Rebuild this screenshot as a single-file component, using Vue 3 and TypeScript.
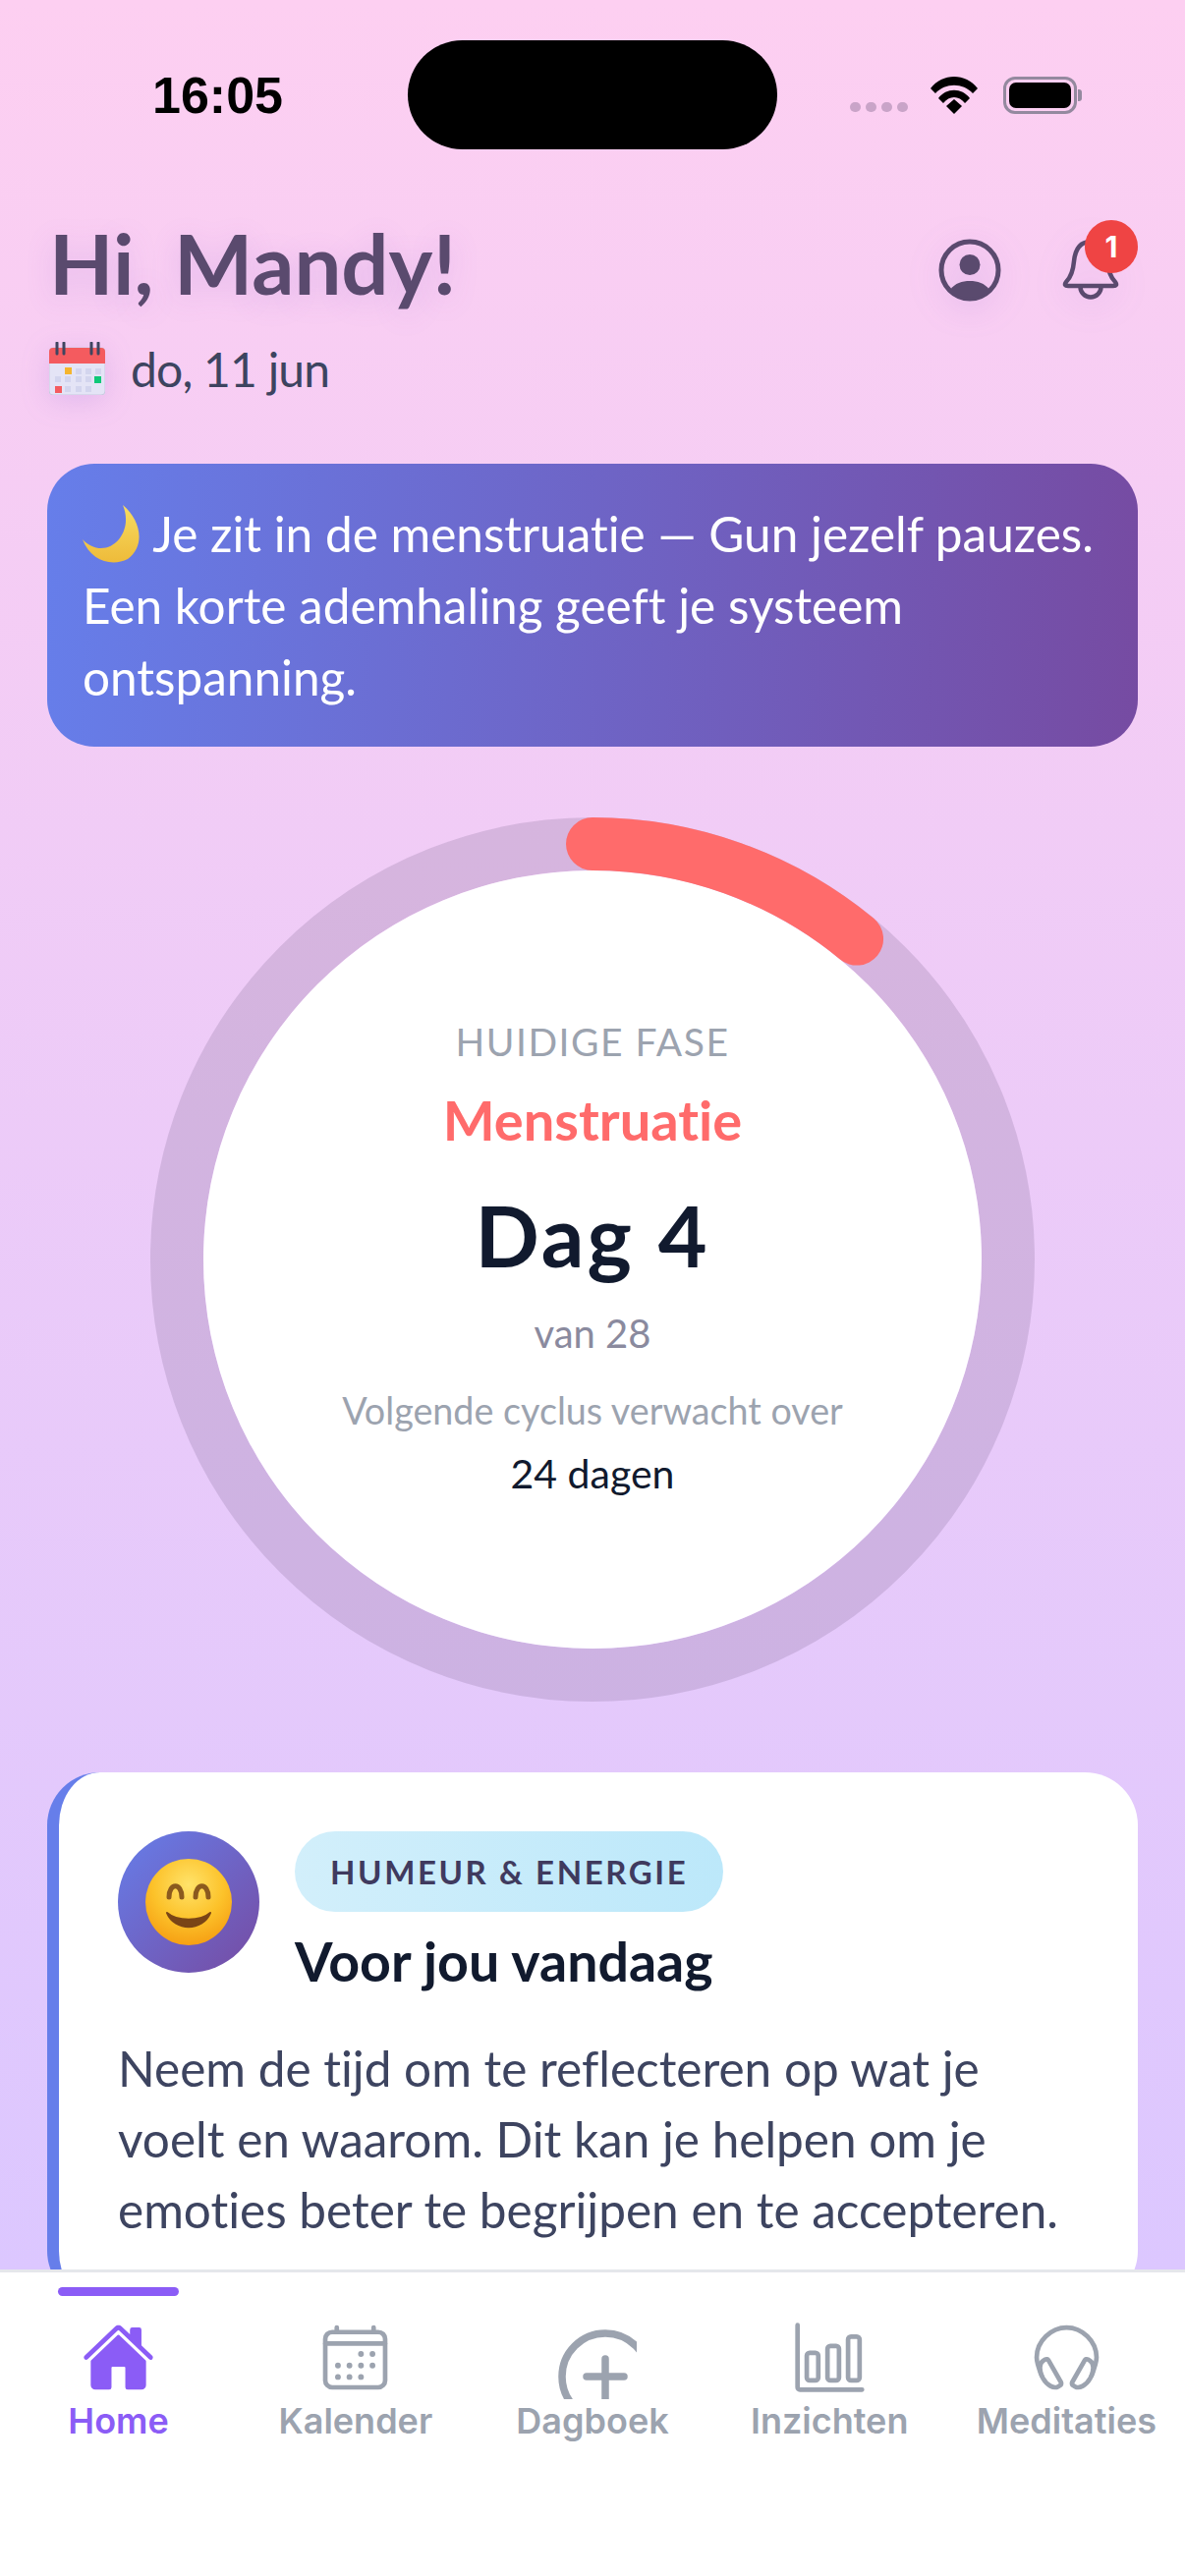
<script setup lang="ts">
const tabs = ["Home", "Kalender", "Dagboek", "Inzichten", "Meditaties"];

const ringRadius = 423;
const arcAngle = (39.5 * Math.PI) / 180;
const arcEnd = {
  x: 450 + ringRadius * Math.sin(arcAngle),
  y: 450 - ringRadius * Math.cos(arcAngle),
};
const arcPath = `M450 ${450 - ringRadius} A${ringRadius} ${ringRadius} 0 0 1 ${arcEnd.x} ${arcEnd.y}`;
</script>

<template>
  <div class="screen">
    <main class="content">
      <div class="status">
        <div class="status-left"><span class="time">16:05</span></div>
        <div class="island"></div>
        <div class="status-right">
          <span class="dots"><i></i><i></i><i></i><i></i></span>
          <svg class="wifi" width="50" height="38" viewBox="0 0 50 38">
            <path d="M1 12 C13 -4 37 -4 49 12 L44 17 C34 6 16 6 6 17Z" />
            <path d="M9 22 C17 11 33 11 41 22 L36 27 C30 19 20 19 14 27Z" />
            <path d="M17 30 L25 23 L33 30 L25 38Z" />
          </svg>
          <span class="battery"><b></b></span>
          <span class="battery-cap"></span>
        </div>
      </div>

      <header class="header">
        <h1 class="title">Hi, Mandy!</h1>
        <div class="actions">
          <svg width="66" height="66" viewBox="0 0 66 66" class="action-icon">
            <circle cx="33" cy="33" r="29" fill="none" stroke="#5a4a6e" stroke-width="5" />
            <circle cx="33" cy="27.5" r="10.5" fill="#5a4a6e" />
            <path d="M13 53 C18 46 25 44 33 44 C41 44 48 46 53 53 A29 29 0 0 1 13 53Z" fill="#5a4a6e" />
          </svg>
          <div class="bell">
            <svg width="60" height="66" viewBox="0 0 60 66" class="action-icon">
              <path d="M30 4 C18 4 14 14 13 24 C12 36 9 41 5 45 C3 48 4 49 7 49 H53 C56 49 57 48 55 45 C51 41 48 36 47 24 C46 14 42 4 30 4Z" fill="none" stroke="#5a4a6e" stroke-width="4.5" stroke-linejoin="round" />
              <path d="M19.5 50 A10.5 10.5 0 0 0 40.5 50" fill="none" stroke="#5a4a6e" stroke-width="4.5" />
            </svg>
            <span class="badge">1</span>
          </div>
        </div>
      </header>

      <div class="date">
        <svg width="57" height="54" viewBox="0 0 57 54">
          <rect x="0" y="6" width="57" height="48" rx="4" fill="#e4e4f6" stroke="#c9cbe0" />
          <path d="M0 22 V10 a4 4 0 0 1 4 -4 H53 a4 4 0 0 1 4 4 V22Z" fill="#f45b5f" />
          <path d="M8 1 V12 M15 1 V12 M43 1 V12 M50 1 V12" stroke="#3f4560" stroke-width="3" stroke-linecap="round" />
          <g fill="#d3d5ee">
            <rect x="27" y="27" width="6" height="6" /><rect x="37" y="27" width="6" height="6" /><rect x="47" y="27" width="6" height="6" />
            <rect x="6" y="35" width="6" height="6" /><rect x="16" y="35" width="6" height="6" /><rect x="27" y="35" width="6" height="6" /><rect x="37" y="35" width="6" height="6" />
            <rect x="16" y="45" width="6" height="6" /><rect x="27" y="45" width="6" height="6" /><rect x="37" y="45" width="6" height="6" />
          </g>
          <rect x="16" y="26" width="7" height="7" fill="#f5b52e" />
          <rect x="46" y="35" width="7" height="7" fill="#0fc878" />
          <rect x="6" y="45" width="7" height="7" fill="#f45b5f" />
        </svg>
        <span>do, 11 jun</span>
      </div>

      <section class="banner">
        <svg class="moon" width="60" height="60" viewBox="0 0 60 60">
          <defs>
            <linearGradient id="moonFill" x1="0" y1="0" x2="0" y2="1">
              <stop offset="0" stop-color="#f7dc62" />
              <stop offset="1" stop-color="#eebb3a" />
            </linearGradient>
          </defs>
          <path d="M41 0 C60 16 64 42 46 55 C30 63 8 57 0 35 C12 48 28 46 37 35 C45 25 46 12 41 0Z" fill="url(#moonFill)" />
        </svg>
        Je zit in de menstruatie — Gun jezelf pauzes. Een korte ademhaling geeft je systeem ontspanning.
      </section>

      <section class="ring">
        <svg class="ring-art" width="900" height="900" viewBox="0 0 900 900">
          <circle cx="450" cy="450" :r="ringRadius" fill="none" stroke="#6e5a82" stroke-opacity="0.2" stroke-width="54" />
          <circle cx="450" cy="450" r="396" fill="#fff" />
          <path :d="arcPath" fill="none" stroke="#ff6b6b" stroke-width="54" stroke-linecap="round" />
        </svg>
        <div class="ring-text">
          <div class="phase-label">HUIDIGE FASE</div>
          <div class="phase-name">Menstruatie</div>
          <div class="day">Dag 4</div>
          <div class="of">van 28</div>
          <div class="next">Volgende cyclus verwacht over</div>
          <div class="days">24 dagen</div>
        </div>
      </section>

      <article class="card">
        <div class="card-head">
          <div class="avatar">
            <svg width="88" height="88" viewBox="0 0 88 88">
              <defs>
                <radialGradient id="faceFill" cx="0.5" cy="0.3" r="0.75">
                  <stop offset="0" stop-color="#ffe36a" />
                  <stop offset="0.55" stop-color="#fcc22a" />
                  <stop offset="1" stop-color="#f59a10" />
                </radialGradient>
              </defs>
              <circle cx="44" cy="44" r="44" fill="url(#faceFill)" />
              <path d="M24 39 C24 24 37 24 37 39" fill="none" stroke="#8b5a1e" stroke-width="5" stroke-linecap="round" />
              <path d="M51 39 C51 24 64 24 64 39" fill="none" stroke="#8b5a1e" stroke-width="5" stroke-linecap="round" />
              <path d="M22 55 C30 74 58 74 66 55 C56 64 32 64 22 55Z" fill="#7a4516" stroke="#7a4516" stroke-width="2" stroke-linejoin="round" />
            </svg>
          </div>
          <div class="card-titles">
            <span class="pill">HUMEUR &amp; ENERGIE</span>
            <h2 class="card-title">Voor jou vandaag</h2>
          </div>
        </div>
        <p class="card-body">Neem de tijd om te reflecteren op wat je voelt en waarom. Dit kan je helpen om je emoties beter te begrijpen en te accepteren.</p>
      </article>
    </main>

    <nav class="tabbar">
      <div v-for="(tab, i) in tabs" :key="tab" class="tab" :class="{ active: i === 0 }">
        <div class="indicator"></div>
        <div class="tab-icon">
          <svg v-if="i === 0" width="75" height="75" viewBox="0 0 512 512" fill="#8b5cf6">
            <path d="M261.56 101.28a8 8 0 00-11.06 0L66.4 277.15a8 8 0 00-2.47 5.79L63.9 448a32 32 0 0032 32H192a16 16 0 0016-16V328a8 8 0 018-8h80a8 8 0 018 8v136a16 16 0 0016 16h96.06a32 32 0 0032-32V282.94a8 8 0 00-2.47-5.79z" />
            <path d="M490.91 244.15l-74.8-71.56V64a16 16 0 00-16-16h-48a16 16 0 00-16 16v32l-57.92-55.38C272.77 35.14 264.71 32 256 32c-8.68 0-16.72 3.14-22.14 8.63l-212.7 203.5c-6.22 6-7 15.87-1.34 22.37A16 16 0 0043 267.56L250.5 69.28a8 8 0 0111.06 0l207.52 198.28a16 16 0 0022.59-.44c6.14-6.36 5.63-16.86-.76-22.97z" />
          </svg>
          <svg v-else-if="i === 1" width="75" height="75" viewBox="0 0 512 512" fill="none" stroke="#9ca3af" stroke-width="32" stroke-linecap="round">
            <rect x="48" y="80" width="416" height="384" rx="48" />
            <path d="M128 48v32M384 48v32M464 160H48" />
            <g fill="#9ca3af" stroke="none">
              <circle cx="296" cy="232" r="20" /><circle cx="376" cy="232" r="20" />
              <circle cx="136" cy="312" r="20" /><circle cx="216" cy="312" r="20" /><circle cx="296" cy="312" r="20" /><circle cx="376" cy="312" r="20" />
              <circle cx="136" cy="392" r="20" /><circle cx="216" cy="392" r="20" /><circle cx="296" cy="392" r="20" />
            </g>
          </svg>
          <svg v-else-if="i === 2" class="add-icon" width="81" height="80" viewBox="0 0 81 80" fill="none" stroke="#9ca3af" stroke-width="7.5" stroke-linecap="round">
            <circle cx="49" cy="57" r="44" />
            <path d="M49 39V84M30 57H68" />
          </svg>
          <svg v-else-if="i === 3" width="75" height="75" viewBox="0 0 512 512" fill="none" stroke="#9ca3af" stroke-width="32" stroke-linecap="round" stroke-linejoin="round">
            <path d="M32 32v432a16 16 0 0016 16h432" />
            <rect x="96" y="224" width="80" height="192" rx="20" />
            <rect x="240" y="176" width="80" height="240" rx="20" />
            <rect x="383" y="112" width="80" height="304" rx="20" />
          </svg>
          <svg v-else width="75" height="75" viewBox="0 0 512 512" fill="none" stroke="#9ca3af" stroke-width="32" stroke-linecap="round" stroke-linejoin="round">
            <path d="M83 384c-13-33-35-93.37-35-128C48 141.12 149.33 48 256 48s208 93.12 208 208c0 34.63-23 97-35 128" />
            <path d="M108.39 270.13l-13.69 8c-30.23 17.7-31.7 72.41-3.38 122.2s75.87 75.81 106.1 58.12l13.69-8a16.16 16.16 0 005.78-21.87L130 276a15.74 15.74 0 00-21.61-5.87zM403.61 270.13l13.69 8c30.23 17.69 31.74 72.4 3.38 122.19s-75.87 75.81-106.1 58.12l-13.69-8a16.16 16.16 0 01-5.78-21.87L382 276a15.74 15.74 0 0121.61-5.87z" />
          </svg>
        </div>
        <span class="tab-label">{{ tab }}</span>
      </div>
    </nav>
  </div>
</template>

<style>
body {
  margin: 0;
  background: #fff;
}
</style>

<style scoped>
.screen {
  width: 1206px;
  height: 2622px;
  display: flex;
  flex-direction: column;
  overflow: hidden;
  font-family: Lato, "Open Sans", sans-serif;
  font-variant-ligatures: none;
  color: #3d4460;
}
.content {
  flex: 1;
  min-height: 0;
  overflow: hidden;
  background: linear-gradient(180deg, #fdcff1 0%, #dcc7ff 100%);
}

.status {
  display: flex;
  align-items: center;
  padding-top: 41px;
  height: 111px;
}
.status-left {
  width: 415px;
  padding-left: 155px;
  box-sizing: border-box;
}
.time {
  font-family: "Liberation Sans", sans-serif;
  font-weight: 700;
  font-size: 52px;
  color: #000;
  line-height: 60px;
  display: block;
}
.island {
  width: 376px;
  height: 111px;
  border-radius: 56px;
  background: #000;
}
.status-right {
  display: flex;
  align-items: center;
  padding-left: 74px;
}
.dots {
  display: flex;
  gap: 5px;
  margin-top: 24px;
  margin-right: 22px;
}
.dots i {
  width: 11px;
  height: 10px;
  border-radius: 5px;
  background: #c9a4c8;
}
.wifi {
  margin-right: 25px;
}
.battery {
  width: 75px;
  height: 38px;
  box-sizing: border-box;
  border: 3px solid #94899f;
  border-radius: 12px;
  padding: 3px;
  display: flex;
}
.battery b {
  flex: 1;
  background: #000;
  border-radius: 7px;
}
.battery-cap {
  width: 4px;
  height: 12px;
  margin-left: 1px;
  background: #94899f;
  border-radius: 0 3px 3px 0;
}

.header {
  display: flex;
  justify-content: space-between;
  margin-top: 65px;
  padding: 0 66px 0 50px;
}
.title {
  margin: 0;
  font-size: 85px;
  line-height: 100px;
  font-weight: 700;
  color: #5a4a6e;
  text-shadow: 0 6px 30px rgba(130, 90, 210, 0.18);
}
.actions {
  display: flex;
  gap: 60px;
  margin-top: 25px;
}
.action-icon {
  display: block;
  filter: drop-shadow(0 6px 16px rgba(130, 90, 210, 0.18));
}
.bell {
  position: relative;
  height: 66px;
}
.badge {
  position: absolute;
  top: -18px;
  left: 24px;
  width: 54px;
  height: 54px;
  border-radius: 50%;
  background: #ef4444;
  color: #fff;
  font-family: Inter, sans-serif;
  font-weight: 700;
  font-size: 30px;
  line-height: 54px;
  text-align: center;
}

.date {
  display: flex;
  align-items: center;
  gap: 26px;
  margin-top: 28px;
  padding-left: 50px;
  height: 60px;
  font-size: 48px;
  letter-spacing: -0.8px;
}
.date svg {
  filter: drop-shadow(0 6px 14px rgba(130, 90, 210, 0.18));
}

.banner {
  margin: 67px 48px 0;
  padding: 35px 36px 34px;
  border-radius: 48px;
  background: linear-gradient(93deg, #667eea 0%, #764ba2 100%);
  color: #fff;
  font-size: 49.5px;
  line-height: 73px;
}
.moon {
  vertical-align: -12px;
  margin-top: -20px;
}

.ring {
  display: grid;
  justify-content: center;
  margin-top: 72px;
}
.ring-art,
.ring-text {
  grid-area: 1 / 1;
}
.ring-text {
  display: flex;
  flex-direction: column;
  align-items: center;
  padding-top: 204px;
}
.phase-label {
  font-size: 39px;
  line-height: 48px;
  letter-spacing: 1.5px;
  color: #9ca3af;
}
.phase-name {
  margin-top: 24px;
  font-size: 56px;
  line-height: 64px;
  font-weight: 700;
  color: #ff6b6b;
}
.day {
  margin-top: 35px;
  font-size: 86px;
  line-height: 100px;
  font-weight: 700;
  letter-spacing: 3px;
  color: #111a2e;
}
.of {
  margin-top: 25px;
  font-size: 40px;
  line-height: 50px;
  color: #8a8a9e;
}
.next {
  margin-top: 31px;
  font-size: 37.7px;
  line-height: 46px;
  color: #9ca3af;
}
.days {
  margin-top: 17px;
  font-size: 41px;
  line-height: 48px;
  color: #111a2e;
}

.card {
  margin: 72px 48px 0;
  padding: 60px;
  border-left: 12px solid #667eea;
  border-radius: 54px;
  background: #fff;
}
.card-head {
  display: flex;
  gap: 36px;
}
.avatar {
  width: 144px;
  height: 144px;
  border-radius: 50%;
  background: linear-gradient(135deg, #667eea, #764ba2);
  display: flex;
  align-items: center;
  justify-content: center;
  flex-shrink: 0;
}
.card-titles {
  display: flex;
  flex-direction: column;
  align-items: flex-start;
}
.pill {
  height: 82px;
  padding: 0 36px;
  border-radius: 41px;
  background: linear-gradient(90deg, #d2effb, #bce8fa);
  color: #3f3a5e;
  font-size: 33px;
  font-weight: 700;
  letter-spacing: 2.6px;
  line-height: 82px;
}
.card-title {
  margin: 15px 0 0;
  font-size: 55.5px;
  line-height: 70px;
  font-weight: 700;
  color: #111a2e;
}
.card-body {
  margin: 38px 0 0;
  font-size: 49.5px;
  line-height: 72px;
  color: #3d4460;
}

.tabbar {
  height: 312px;
  box-sizing: border-box;
  border-top: 3px solid #e5e7eb;
  background: #fff;
  display: grid;
  grid-template-columns: repeat(5, 1fr);
}
.tab {
  display: flex;
  flex-direction: column;
  align-items: center;
  font-family: Inter, sans-serif;
  color: #9ca3af;
}
.indicator {
  width: 123px;
  height: 9px;
  margin-top: 15px;
  border-radius: 5px;
}
.tab.active .indicator {
  background: #8b5cf6;
}
.tab-icon {
  height: 80px;
  margin-top: 25px;
}
.tab-icon svg {
  display: block;
}
.add-icon {
  margin-left: 9px;
}
.tab-label {
  margin-top: 1px;
  font-size: 36px;
  line-height: 42px;
  font-weight: 600;
}
.tab.active .tab-label {
  color: #8b5cf6;
}
</style>
